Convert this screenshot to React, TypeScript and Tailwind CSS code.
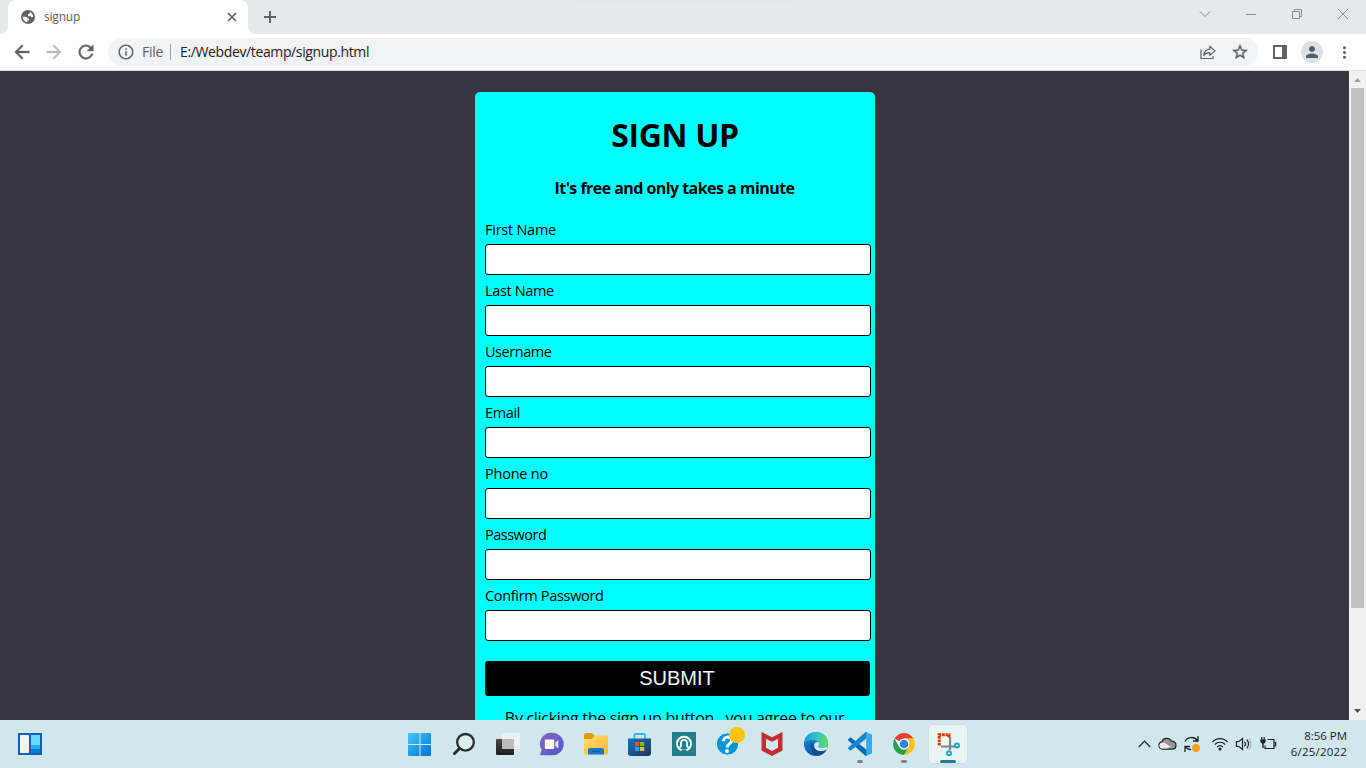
import type { ReactNode } from 'react';
import {
  MdArrowBack,
  MdArrowForward,
  MdInfoOutline,
  MdMoreVert,
  MdPerson,
  MdRefresh,
  MdStarBorder,
} from 'react-icons/md';

const fields = [
  { label: 'First Name', spacing: 'tracking-[-0.25px]' },
  { label: 'Last Name', spacing: 'tracking-[-0.35px]' },
  { label: 'Username', spacing: 'tracking-[-0.45px]' },
  { label: 'Email', spacing: 'tracking-[-0.35px]' },
  { label: 'Phone no', spacing: 'tracking-[-0.22px]' },
  { label: 'Password', spacing: 'tracking-[-0.5px]' },
  { label: 'Confirm Password', spacing: 'tracking-[-0.32px]' },
];

function TabStrip() {
  return (
    <div className="flex h-[34px] shrink-0 items-end bg-[#e5e9ec]">
      <div className="h-2 w-2 bg-white">
        <div className="h-2 w-2 rounded-br-lg bg-[#e5e9ec]" />
      </div>
      <div className="flex h-[34px] w-60 items-center rounded-t-lg bg-white pl-[13px] pr-[11px]">
        <svg className="h-[14px] w-[14px]" viewBox="0 0 14 14" fill="none">
          <circle cx="7" cy="7" r="7" fill="#5f6368" />
          <path fill="#fff" d="M8.600 2c2 .6 3.400 2.400 3.600 4.600-.6.600-1.300.8-2 .3l-.8-.8c-.7 0-1.500.2-2.200-.2-.5-.5-.3-1.200 0-1.600.6-.5 1.600-.2 1.700-1z" />
          <path fill="#fff" d="M1.800 6.800h3c1.200 0 1.800.8 1.800 1.700h1.200c.6.400.6 1.300.2 1.900H6.300v1.800C3.500 12 1.700 9.700 1.800 6.800z" />
        </svg>
        <span className="ml-[9px] flex-1 text-[12px] tracking-[-0.2px] text-[#5f6368]">signup</span>
        <svg className="h-[10px] w-[10px]" viewBox="0 0 10 10" stroke="#5f6368" strokeWidth="1.700">
          <path d="M1 1l8 8M9 1l-8 8" />
        </svg>
      </div>
      <div className="h-2 w-2 bg-white">
        <div className="h-2 w-2 rounded-bl-lg bg-[#e5e9ec]" />
      </div>
      <svg className="mb-[11px] ml-[8px] h-3 w-3" viewBox="0 0 12 12" stroke="#5f6368" strokeWidth="2">
        <path d="M6 0v12M0 6h12" />
      </svg>
      <div className="flex-1 self-start pl-[299px]">
        <div className="h-[2px] w-[220px] bg-[#e0e4e7] blur-[1px]" />
      </div>
      <div className="flex h-[28px] w-[184px] items-center self-start">
        <svg className="h-7 w-[46px]" viewBox="0 0 46 28" fill="none" stroke="#8a8d90">
          <path d="M18 11.500l5 5 5-5" />
        </svg>
        <svg className="h-7 w-[46px]" viewBox="0 0 46 28" fill="none" stroke="#8a8d90">
          <path d="M18 14.500h10" />
        </svg>
        <svg className="h-7 w-[46px]" viewBox="0 0 46 28" fill="none" stroke="#8a8d90">
          <path d="M18.500 11.500h7v7h-7zM20.500 11.500v-2h7v7h-2" />
        </svg>
        <svg className="h-7 w-[46px]" viewBox="0 0 46 28" fill="none" stroke="#8a8d90">
          <path d="M18 9l10 10M28 9l-10 10" />
        </svg>
      </div>
    </div>
  );
}

function Toolbar() {
  return (
    <div className="flex h-[37px] shrink-0 items-center border-b border-[#dadce0] bg-white pl-[11px] text-[#5f6368]">
      <MdArrowBack className="h-[22px] w-[22px] stroke-[0.4] [&>path[fill=none]]:stroke-none" />
      <MdArrowForward className="ml-[10px] h-[22px] w-[22px] stroke-[0.4] text-[#babcbe] [&>path[fill=none]]:stroke-none" />
      <MdRefresh className="ml-[10px] h-[22px] w-[22px] stroke-[0.4] [&>path[fill=none]]:stroke-none" />
      <div className="ml-[11px] flex h-7 w-[1150px] items-center rounded-full bg-[#f1f3f4] pl-[9px] pr-[9px]">
        <MdInfoOutline className="h-[18px] w-[18px]" />
        <span className="ml-[7px] pb-px text-[14px] tracking-[-0.3px]">File</span>
        <div className="ml-[7px] h-4 w-px bg-[#9aa0a6]" />
        <span className="ml-[9px] flex-1 pb-px text-[14px] tracking-[-0.37px] text-[#202124]">
          E:/Webdev/teamp/signup.html
        </span>
        <svg className="mr-[15px] h-4 w-4" viewBox="0 0 16 16" fill="none" stroke="#5f6368" strokeWidth="1.200">
          <path d="M1 5.500v9h12v-2.500" />
          <path d="M3.800 11.500c.4-4 2.500-6.200 6-6.400V2.300l5.200 4.600-5.200 4.500V8.600c-2.700 0-4.500.8-6 2.900z" strokeLinejoin="round" />
        </svg>
        <MdStarBorder className="h-[18px] w-[18px] stroke-[0.6] [&>path[fill=none]]:stroke-none" />
      </div>
      <svg className="ml-[15px] h-[14px] w-[14px]" viewBox="0 0 14 14">
        <path fill="#5f6368" fillRule="evenodd" d="M0 0h14v14H0zM2 2v10h7V2z" />
      </svg>
      <div className="ml-[14px] flex h-[22px] w-[22px] items-center justify-center rounded-full bg-[#dee1e6]">
        <MdPerson className="h-[18px] w-[18px] text-[#545d70]" />
      </div>
      <MdMoreVert className="ml-[12px] h-[19px] w-[19px]" />
    </div>
  );
}

function SignupForm() {
  return (
    <div className="flex h-[649px] w-[400px] flex-col rounded-t-[5px] bg-[#00ffff] px-[10px] text-black">
      <h1 className="flex h-[87px] items-center justify-center pb-[2px] text-[32px] font-bold tracking-[-0.35px]">
        SIGN UP
      </h1>
      <h4 className="mb-[17px] h-[18px] pr-px text-center text-[16px] font-bold leading-[18px] tracking-[-0.55px]">
        It's free and only takes a minute
      </h4>
      {fields.map((field) => (
        <label key={field.label} className="block text-[14.500px]">
          <span className={`block h-[30px] leading-[31px] ${field.spacing}`}>{field.label}</span>
          <input className="block h-[31px] w-[386px] rounded-[3px] border border-black bg-white px-2 outline-none" />
        </label>
      ))}
      <button className="mt-5 h-[35px] w-[385px] shrink-0 rounded-[3px] bg-black pb-px pr-px font-['Liberation_Sans',sans-serif] text-[20px] text-[#f0f8ff]">
        SUBMIT
      </button>
      <p className="mt-[10px] whitespace-pre pr-px text-center text-[16px] leading-[24px] tracking-[-0.3px]">
        By clicking the sign up button , you agree to our
      </p>
    </div>
  );
}

function Scrollbar() {
  return (
    <div className="flex w-[17px] shrink-0 flex-col items-center bg-[#f1f1f1]">
      <svg className="h-[17px] w-[17px]" viewBox="0 0 17 17" fill="#a3a3a3">
        <path d="M5 11h7L8.500 7z" />
      </svg>
      <div className="h-[520px] w-[13px] bg-[#c1c1c1]" />
      <svg className="mt-auto h-[17px] w-[17px]" viewBox="0 0 17 17" fill="#505050">
        <path d="M5 6h7L8.500 10z" />
      </svg>
    </div>
  );
}

function Slot({ children, running = false }: { children: ReactNode; running?: boolean }) {
  return (
    <div className="flex w-11 flex-col items-center pt-[12px]">
      <svg className="h-6 w-6 overflow-visible" viewBox="0 0 24 24" fill="none">
        {children}
      </svg>
      {running && <div className="mt-[4px] h-[3px] w-[6px] rounded-full bg-[#7f8589]" />}
    </div>
  );
}

function TaskbarApps() {
  return (
    <div className="flex h-full">
      <Slot>
        <defs>
          <linearGradient id="win" x1="0" y1="0" x2="1" y2="1">
            <stop stopColor="#46c8fa" />
            <stop offset="1" stopColor="#0070d0" />
          </linearGradient>
        </defs>
        <path fill="url(#win)" d="M0 2a1 1 0 011-1h10.500v11H0zM12.500 1H22a1 1 0 011 1v10H12.500zM0 13h11.500v11H1a1 1 0 01-1-1zM12.500 13H23v10a1 1 0 01-1 1H12.500z" />
      </Slot>
      <Slot>
        <circle cx="13.500" cy="10.300" r="8.300" fill="#dfeef2" stroke="#2b2b2b" strokeWidth="2.300" />
        <path d="M7.500 16.500L2.500 21.500" stroke="#2b2b2b" strokeWidth="3" strokeLinecap="round" />
      </Slot>
      <Slot>
        <defs>
          <linearGradient id="tv" x1="0" y1="0" x2="0" y2="1">
            <stop stopColor="#4c4c4c" />
            <stop offset="1" stopColor="#1c1c1c" />
          </linearGradient>
        </defs>
        <rect y="7" width="18" height="16" rx="1" fill="url(#tv)" />
        <rect x="6" y="1" width="18" height="16" rx="1" fill="#f0f0f0" />
        <path fill="#bdbdbd" d="M6 7h12v10H7a1 1 0 01-1-1z" />
      </Slot>
      <Slot>
        <defs>
          <linearGradient id="chat" x1="0" y1="0" x2="1" y2="1">
            <stop stopColor="#8f62a6" />
            <stop offset=".5" stopColor="#6a61cd" />
            <stop offset="1" stopColor="#4d55c5" />
          </linearGradient>
        </defs>
        <g transform="translate(-.7 0)">
          <path fill="url(#chat)" d="M12 .8a11.300 11.300 0 110 22.500H1.500c-.8 0-.8-.7-.5-1.200l1.300-4A11.300 11.300 0 0112 .8z" />
          <rect x="5.500" y="7.500" width="9.500" height="9.500" rx="1" fill="#fff" />
          <path fill="#e5e4fb" d="M16 10.500L19 8v8.500l-3-2.500z" />
        </g>
      </Slot>
      <Slot>
        <defs>
          <linearGradient id="folder" x1="0" y1="0" x2="1" y2="1">
            <stop stopColor="#ffdf70" />
            <stop offset="1" stopColor="#f8b72a" />
          </linearGradient>
        </defs>
        <path fill="#dc9d10" d="M0 3a2 2 0 012-2h6l3 3-2 5H0z" />
        <path fill="url(#folder)" d="M0 7h8l3-3.500h12a1 1 0 011 1V21a1.500 1.500 0 01-1.500 1.500h-21A1.500 1.500 0 010 21z" />
        <path fill="#1778c8" d="M4 18a2 2 0 012-2h12a2 2 0 012 2v4.500H4z" />
        <path d="M8 19.500h8" stroke="#0e589b" strokeWidth="1.300" />
      </Slot>
      <Slot>
        <defs>
          <linearGradient id="store" x1="0" y1="0" x2="1" y2="1">
            <stop stopColor="#1273c4" />
            <stop offset="1" stopColor="#243456" />
          </linearGradient>
        </defs>
        <path d="M6.500 7V3a1 1 0 011-1H16a1 1 0 011 1v4" stroke="#31b6ed" strokeWidth="1.800" />
        <path fill="url(#store)" d="M0 6.500h23V21a3 3 0 01-3 3H3a3 3 0 01-3-3z" />
        <path fill="#f25022" d="M7 10h4.200v4H7z" />
        <path fill="#7fba00" d="M12 10h4.200v4H12z" />
        <path fill="#00a4ef" d="M7 15h4.200v4H7z" />
        <path fill="#ffb900" d="M12 15h4.200v4H12z" />
      </Slot>
      <Slot>
        <path fill="#237f8f" d="M0 0h24v24H0z" />
        <circle cx="12" cy="11.700" r="7" stroke="#fff" strokeWidth="2" />
        <path d="M7.700 15.500L9 14v-3.200a3 3 0 016 0V14l1.300 1.500" stroke="#fff" strokeWidth="1.700" />
        <path d="M9.500 19h5" stroke="#237f8f" strokeWidth="2.500" />
      </Slot>
      <Slot>
        <circle cx="11.500" cy="12" r="11.200" fill="#0a94d4" stroke="#e6f5fa" strokeWidth="1" />
        <path d="M7.500 9.300C7.600 3.700 16 3.800 15.700 8.800c-.2 2.900-4.500 3-4.500 6.700" stroke="#fff" strokeWidth="3" />
        <circle cx="11" cy="19" r="1.900" fill="#fff" />
        <circle cx="21" cy="3" r="8" fill="#ffc20e" />
      </Slot>
      <Slot>
        <path fill="#c52b30" d="M1.500 0L12 5.200 22.500 0v18.500L12 24 1.500 18.500zM6 6.800v9l6 3.100 6-3.100v-9l-6 3z" fillRule="evenodd" />
      </Slot>
      <Slot>
        <defs>
          <linearGradient id="edgeTop" x1="0" y1=".3" x2="1" y2=".4">
            <stop stopColor="#1c9de0" />
            <stop offset=".55" stopColor="#35c1c5" />
            <stop offset="1" stopColor="#65dc55" />
          </linearGradient>
          <linearGradient id="edgeLeft" x1="0" y1="0" x2="0" y2="1">
            <stop stopColor="#1696df" />
            <stop offset="1" stopColor="#0b57a5" />
          </linearGradient>
        </defs>
        <circle cx="12" cy="12" r="12" fill="url(#edgeLeft)" />
        <path fill="url(#edgeTop)" d="M.2 10.500C1 4 6 0 12 0c7 0 12 5 12 10.500 0 4-3 6-6.300 6-3 0-4-1.200-3.300-2.200 1-1.500.8-5-3.400-6-4-.8-8.800-.2-10.800 2.200z" />
        <path fill="#cfe8ef" d="M11.500 10.500c-3 2.700-1 8.600 5 8.600 3 0 5.400-1.100 6.200-1.700l1.300-4c-2.500 3-9.500 3.500-9.700 1.400-.1-.8 1-1.600.7-3.300-.3-1.500-2-2-3.500-1z" />
        <path fill="#104b93" d="M8.200 9.500C4 15 9.500 23.500 14.500 23.700c3.300-.5 6-2.500 7.500-5-7 2.800-13.500-.8-13.800-9.200z" />
      </Slot>
      <Slot running>
        <path fill="#0c6cb2" d="M2.500 5.300L19 18v6h-1.500L0 8.300V7.500z" />
        <path fill="#1684cf" d="M2.500 18.700L19 6V0h-1.500L0 15.700v.8z" />
        <path fill="#37a9ee" d="M17.500 0L24 2.500v19L17.500 24l.7-1.500v-21z" />
      </Slot>
      <Slot running>
        <circle cx="12" cy="12" r="11" fill="#fff" />
        <path fill="#e34133" d="M12 12L2.500 6.500A11 11 0 0121.500 6.500H12z" />
        <path fill="#fbc116" d="M12 6.500h9.500A11 11 0 0112 23l4.800-8.200z" />
        <path fill="#26a148" d="M2.500 6.500A11 11 0 0012 23l4.800-8.200L12 17.500l-4.800-2.700z" />
        <circle cx="12" cy="12" r="5.500" fill="#fff" />
        <circle cx="12" cy="12" r="4.300" fill="#377ee8" />
      </Slot>
      <div className="flex w-11 flex-col items-center pt-[5px]">
        <div className="flex h-[38px] w-[38px] flex-col items-center rounded bg-[#e9f4f7] pt-[7px] shadow-[0_0_1px_#9eb8bd]">
          <svg className="h-6 w-6 shrink-0" viewBox="0 0 24 24" fill="none">
            <path fill="#f8f8f8" d="M0 0h15v15H0z" />
            <path d="M3.200 13.500V2.800h9.800v3" stroke="#d83b01" strokeWidth="3" strokeDasharray="2.700 .7" />
            <path d="M14 5v13M5 14.500h14" stroke="#7f8589" strokeWidth="2.200" />
            <circle cx="21" cy="13.500" r="2" stroke="#1a9fe0" strokeWidth="1.900" />
            <circle cx="13" cy="21.300" r="2" stroke="#1a9fe0" strokeWidth="1.900" />
          </svg>
          <div className="mt-[4px] h-[3px] w-4 shrink-0 rounded-full bg-[#238091]" />
        </div>
      </div>
    </div>
  );
}

function Tray() {
  return (
    <div className="flex h-full items-center text-[#1d1d1d]">
      <svg className="h-6 w-[122px]" viewBox="0 0 122 24" fill="none" stroke="#1d2427" strokeWidth="1.200">
        <path d="M.8 15L6.500 9l5.700 6" />
        <path fill="#969696" d="M25 17.200a3.700 3.700 0 01-.6-7.300c1.200-4.300 7.500-4.600 9.200-.8 3-.2 4.900 1.700 4.900 4.200s-1.500 3.900-3.800 3.900z" transform="translate(-.5 0)" />
        <path fill="#ececec" stroke="none" d="M21.400 13.500c.2-1.800 1.400-3 3.600-3 2.500.2 3 1.500 8 4.200l-4 1.900h-4.500c-1.900 0-3.200-1.200-3.100-3.100z" />
        <path d="M47 9.500c2-4.500 9-5.700 12.500-1M60 4v5h-5M53 17.500c-3 .2-4.500-1-5.700-2.800M47 20v-5.500h5" strokeWidth="1.300" />
        <circle cx="58" cy="16" r="3.900" fill="#ff9d0a" stroke="none" />
        <path d="M74.500 10c4-4.500 11-4.500 15 0M76.800 12.500c2.800-3 7.600-3 10.400 0M79.100 15c1.700-1.700 4.100-1.700 5.800 0" />
        <circle cx="82" cy="17" r="1.500" fill="#1d2427" stroke="none" />
        <path d="M98.500 9.500h2.500l3.500-3v11l-3.500-3h-2.500z" />
        <path d="M106.500 9.500c1.200 1.500 1.200 3.500 0 5M108.800 7.700c2.200 2.700 2.200 5.900 0 8.600" />
        <path d="M111 6.500c2.600 3.300 2.600 7.700 0 11" stroke="#abb6ba" />
      </svg>
      <svg className="h-6 w-[18px]" viewBox="0 0 18 24" fill="none" stroke="#1d2427" strokeWidth="1.200">
        <path d="M7.500 7.500H14v9H5v-3M14 10.500h1.700v3.500H14M1.800 5v3M4.200 5v3" />
        <path d="M.3 7.500h5.400v1.800a2.700 2.700 0 01-2 2.500v4.200H2.300v-4.200a2.700 2.700 0 01-2-2.500z" fill="#1d2427" stroke="none" />
      </svg>
      <div className="ml-[8px] mr-[19px] w-[61px] text-right text-[11.500px] leading-4">
        <div className="tracking-[-0.05px]">8:56 PM</div>
        <div className="tracking-[0.2px]">6/25/2022</div>
      </div>
    </div>
  );
}

function Taskbar() {
  return (
    <div className="grid h-12 shrink-0 grid-cols-[398px_572px_1fr] bg-[#cfe7ed]">
      <div className="flex items-center pl-[18px]">
        <svg className="h-6 w-6" viewBox="0 0 24 24">
          <path fill="#0b64b5" d="M0 1h24v22H0z" />
          <rect x="2" y="3" width="9" height="18" rx="1" fill="#f2f2f2" />
          <path fill="#69d7ff" d="M13 3h9v10h-9z" />
          <path fill="#27adf2" d="M13 13h9v4h-9z" />
          <path fill="#087bd4" d="M13 17h9v4h-9z" />
        </svg>
      </div>
      <TaskbarApps />
      <div className="flex justify-end">
        <Tray />
      </div>
    </div>
  );
}

export default function App() {
  return (
    <div className="flex h-[768px] w-[1366px] flex-col overflow-hidden font-['Open_Sans','Noto_Sans',sans-serif]">
      <TabStrip />
      <Toolbar />
      <div className="flex h-[649px] shrink-0 overflow-hidden bg-[#363541]">
        <div className="flex flex-1 justify-center pt-[21px] pl-px">
          <SignupForm />
        </div>
        <Scrollbar />
      </div>
      <Taskbar />
    </div>
  );
}
